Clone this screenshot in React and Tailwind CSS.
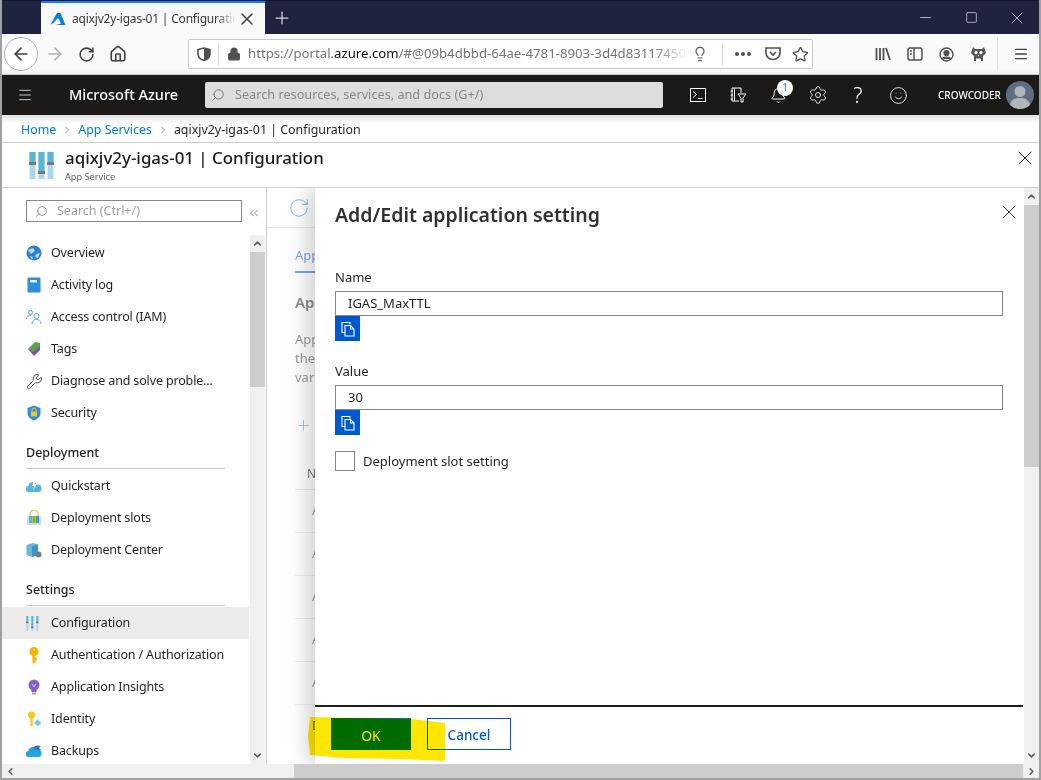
import {
    ArrowLeft, ArrowRight, RotateCw, House, Lock, Lightbulb, Star, Menu, X, Plus, Minus, Square,
    Search, Bell, Settings, Smile, ChevronLeft, ChevronRight, ChevronUp, ChevronDown, ChevronsLeft, Wrench,
} from 'lucide-react';

const font = { fontFamily: '"Noto Sans", "Open Sans", sans-serif' };

const AzureLogo = ({ size = 16 }) => (
    <svg width={size} height={size} viewBox="0 0 16 16">
        <path d="M7 2 L10.5 2 L15.5 14 L5.5 14 L11 12.4 L8 7 L3.5 12 L0.5 13.5 Z" fill="#0d7fd6" />
    </svg>
);

const Sliders = ({ width = 25, height = 27, barWidth = 6, bar = '#59b4d9', light = '#a8d8ee', knob = '#7a7a7a' }) => (
    <svg width={width} height={height} viewBox="0 0 25 27">
        {[0.5, 9.5, 18.5].map((x, i) => (
            <g key={x}>
                <rect x={x} y="0" width={barWidth} height="27" fill={light} />
                <rect x={x} y="0" width={barWidth} height={[10, 19, 10][i]} fill={bar} />
                <rect x={x - 0.5} y={[10, 19, 10][i]} width={barWidth + 1} height="3" fill={knob} />
            </g>
        ))}
    </svg>
);

const icons = {
    overview: (
        <svg width="16" height="16" viewBox="0 0 16 16">
            <circle cx="8" cy="8" r="7.5" fill="#2f7fd0" />
            <path d="M2 5 L7 3 L9 6 L5 9 Z M10 9 L14 8 L12 13 L9 12 Z M4 11 L7 12 L6 15 Z" fill="#b5daf2" />
        </svg>
    ),
    log: (
        <svg width="16" height="16" viewBox="0 0 16 16">
            <rect x="1.5" y="0.5" width="13" height="15" rx="1" fill="#2d8fdc" />
            <rect x="4" y="3" width="7" height="2.5" fill="#e6f3fb" />
        </svg>
    ),
    iam: (
        <svg width="16" height="16" viewBox="0 0 16 16" fill="none" stroke="#4fa3d9" strokeWidth="1">
            <circle cx="4.5" cy="3.5" r="2" />
            <path d="M0.5 10 C1 7 3 6.5 5 6.5" />
            <circle cx="10.5" cy="7" r="2.5" />
            <path d="M6 15 C6.5 11 8.5 10.5 10.5 10.5 C12.5 10.5 14.5 11 15 15" />
        </svg>
    ),
    tags: (
        <svg width="16" height="16" viewBox="0 0 16 16">
            <path d="M2 8 L9 1 L14 2 L14 6 L6 12 Z" fill="#5fa04e" />
            <path d="M2 8 L8 15 L14 9 L14 5 L7 11 Z" fill="#7d53a6" />
        </svg>
    ),
    wrench: <Wrench size={17} strokeWidth={1.2} className="text-[#323130]" />,
    security: (
        <svg width="16" height="16" viewBox="0 0 16 16">
            <path d="M8 0.5 L14.5 3 V8 C14.5 12 11 14.5 8 15.5 C5 14.5 1.5 12 1.5 8 V3 Z" fill="#2d8fdc" />
            <rect x="5" y="6.5" width="6" height="5" fill="#f5c518" />
            <path d="M6 6.5 V5 a2 2 0 0 1 4 0 V6.5" fill="none" stroke="#f5c518" />
        </svg>
    ),
    quickstart: (
        <svg width="16" height="16" viewBox="0 0 16 16">
            <path d="M3 14 a3 3 0 0 1 -0.5 -6 a4.5 4.5 0 0 1 8.5 -1.5 a3.8 3.8 0 0 1 1.5 7.5 Z" fill="#59b4d9" />
            <path d="M8 2 L6 8 H8 L7 12 L11 6 H9 L10 2 Z" fill="#fff" />
        </svg>
    ),
    slots: (
        <svg width="16" height="16" viewBox="0 0 16 16">
            <path d="M4 6 V4 a4 4 0 0 1 8 0 V6" fill="none" stroke="#b8d432" strokeWidth="1.2" />
            <rect x="1" y="6" width="14" height="9" rx="1" fill="#d8d8d8" />
            <rect x="3" y="6" width="3" height="7" fill="#59b4d9" />
            <rect x="6.5" y="6" width="3" height="7" fill="#7fba00" />
            <rect x="10" y="6" width="3" height="7" fill="#3a96dd" />
        </svg>
    ),
    center: (
        <svg width="16" height="16" viewBox="0 0 16 16">
            <path d="M0.5 3 L7 1 L12 2.5 V13 L6 15 L0.5 13 Z" fill="#6cb6dd" />
            <path d="M6 4.5 V15 L12 13 V2.5 Z" fill="#3f93c9" />
            <circle cx="12.5" cy="12.5" r="3" fill="#7a7a7a" />
        </svg>
    ),
    config: <Sliders width={14} height={15} barWidth={3.5} />,
    auth: (
        <svg width="16" height="16" viewBox="0 0 16 16">
            <circle cx="8" cy="4.5" r="4.5" fill="#f8b100" />
            <rect x="6.5" y="6" width="3" height="10" fill="#f8b100" />
            <rect x="9" y="11" width="2" height="2" fill="#f8b100" />
            <circle cx="8" cy="3" r="1" fill="#ffe38a" />
        </svg>
    ),
    insights: (
        <svg width="16" height="16" viewBox="0 0 16 16">
            <circle cx="8" cy="6" r="5.5" fill="#8661c5" />
            <path d="M5.5 10 H10.5 V13 H5.5 Z" fill="#8661c5" />
            <rect x="6" y="13.5" width="4" height="2" fill="#a0a0a0" />
            <path d="M6 5 L8 8 L10 5" fill="none" stroke="#d9c9f2" />
        </svg>
    ),
    identity: (
        <svg width="16" height="16" viewBox="0 0 16 16">
            <circle cx="5.5" cy="4" r="3.5" fill="#f8c81c" />
            <rect x="4.5" y="6" width="2.2" height="9" fill="#f8c81c" />
            <path d="M11.5 8.5 L15.5 12 L11.5 15.5 L8 12 Z" fill="#7cc5e8" />
        </svg>
    ),
    backups: (
        <svg width="16" height="16" viewBox="0 0 16 16">
            <path d="M3 14 a3 3 0 0 1 -0.5 -6 a4.5 4.5 0 0 1 8.5 -1.5 a3.8 3.8 0 0 1 1.5 7.5 Z" fill="#1fa6dc" />
            <path d="M7 5 C9 2 12 2 15 3 L13 5 L15 7 C12 8 9 7 7 5 Z" fill="#3f6fc4" />
        </svg>
    ),
};

const NavRow = ({ icon, label, active }) => (
    <div className={`h-8 flex items-center pl-6 text-[12.5px] tracking-[-0.15px] text-[#201f1e] whitespace-nowrap ${active ? 'bg-[#edebe9]' : ''}`}>
        <span className="w-[25px] flex justify-start">{icons[icon]}</span>
        {label}
    </div>
);

const NavHeading = ({ label }) => (
    <div className="h-10 mb-px mx-6 flex items-end pb-[5px] border-b border-[#c8c8c8] w-[199px] text-[12.5px] font-medium text-[#201f1e]">
        {label}
    </div>
);

const VScroll = ({ thumbHeight, className = '' }) => (
    <div className={`w-[15px] bg-[#f0f0f0] flex flex-col shrink-0 ${className}`}>
        <div className="h-[17px] flex items-center justify-center">
            <ChevronUp size={11} strokeWidth={3.5} className="text-[#606060]" />
        </div>
        <div className="flex-1">
            <div className="bg-[#cdcdcd]" style={{ height: thumbHeight }} />
        </div>
        <div className="h-[17px] flex items-center justify-center">
            <ChevronDown size={11} strokeWidth={3.5} className="text-[#606060]" />
        </div>
    </div>
);

const CopyButton = () => (
    <div className="w-[25px] h-[25px] bg-[#0058d1] flex items-center justify-center">
        <svg width="16" height="16" viewBox="0 0 16 16" fill="none" stroke="#fff" strokeWidth="1.1">
            <path d="M10 3.5 V1.5 H2 V11.5 H5" />
            <path d="M5 4.5 H10.5 L14 8 V15 H5 Z" fill="#0058d1" />
            <path d="M10.5 4.5 V8 H14" />
        </svg>
    </div>
);

const Field = ({ label, value }) => (
    <div className="mt-5 w-[668px]">
        <div className="h-5 pt-[2px] flex items-center text-[13px] text-[#201f1e]">{label}</div>
        <div className="mt-1 h-[25px] border border-[#8a8886] pl-3 flex items-center text-[13px] text-[#201f1e]">{value}</div>
        <CopyButton />
    </div>
);

const BackgroundRows = () => (
    <div className="text-[13px] text-[#8ea0b5]">
        {['A', 'A', 'A', 'A', 'A'].map((t, i) => (
            <div key={i} className="h-[43px] border-b border-[#eeeeee] flex items-center pl-[17px]">{t}</div>
        ))}
        <div className="h-[43px] flex items-center pl-[17px] text-[#6b6b00]">D</div>
    </div>
);

export default function App() {
    return (
        <div style={font} className="relative w-[1041px] h-[780px] overflow-hidden bg-white border-l-2 border-r-2 border-b-2 border-[#a0a0a0] flex flex-col">
            {/* title bar */}
            <div className="h-[34px] -ml-[2px] -mr-[2px] bg-[#20233f] border-t border-[#14172c] flex items-end shrink-0 text-white">
                <div className="ml-[41px] w-[224px] h-[33px] bg-[#f9f9fa] border-t-2 border-[#0a84ff] flex items-center pl-[9px] pr-[8px] text-[#38383d]">
                    <AzureLogo size={16} />
                    <span className="ml-[6px] flex-1 text-[12px] tracking-[-0.2px] whitespace-nowrap overflow-hidden [mask-image:linear-gradient(to_right,black_88%,transparent)]">aqixjv2y-igas-01 | Configuration</span>
                    <X size={20} strokeWidth={1.7} className="ml-[1px] shrink-0" />
                </div>
                <div className="w-[34px] h-[33px] flex items-center justify-center">
                    <Plus size={20} strokeWidth={1.5} className="text-[#d8d9e0]" />
                </div>
                <div className="flex-1" />
                <div className="h-[33px] flex items-center text-[#b8bac6]">
                    <div className="w-[46px] flex justify-center"><Minus size={17} strokeWidth={1.3} /></div>
                    <div className="w-[46px] flex justify-center"><Square size={13} strokeWidth={1.6} /></div>
                    <div className="w-[46px] flex justify-center"><X size={20} strokeWidth={1.1} /></div>
                    <div className="w-px" />
                </div>
            </div>

            {/* firefox toolbar */}
            <div className="h-[41px] -ml-[2px] -mr-[2px] pl-1 bg-[#f9f9fa] border-b border-[#d6d6d6] flex items-center shrink-0 text-[#404040]">
                <div className="w-[34px] h-[34px] rounded-full border border-[#b0b0b0] bg-white flex items-center justify-center">
                    <ArrowLeft size={20} strokeWidth={1.9} />
                </div>
                <div className="w-8 flex justify-center ml-px"><ArrowRight size={20} strokeWidth={1.9} className="text-[#b1b1b3]" /></div>
                <div className="w-8 flex justify-center -ml-px"><RotateCw size={17} strokeWidth={2.2} /></div>
                <div className="w-8 flex justify-center"><House size={18} strokeWidth={2.2} /></div>
                <div className="ml-[54px] w-[625px] h-[30px] bg-white border border-[#c8c8c8] rounded-[2px] flex items-center">
                    <svg width="14" height="14" viewBox="0 0 14 14" className="ml-[8px] shrink-0">
                        <path d="M7 1 L13 2.5 V7 C13 10.5 10 12.5 7 13.5 C4 12.5 1 10.5 1 7 V2.5 Z" fill="none" stroke="#505050" strokeWidth="1.6" />
                        <path d="M7 1 V13.5 C10 12.5 13 10.5 13 7 V2.5 Z" fill="#505050" />
                    </svg>
                    <div className="ml-[7px] h-[22px] w-px bg-[#dcdcdc]" />
                    <Lock size={14} strokeWidth={2.4} fill="#505050" className="ml-[8px] text-[#505050] shrink-0" />
                    <span className="ml-[7px] w-[441px] overflow-hidden whitespace-nowrap text-[13.2px] text-[#737373] [mask-image:linear-gradient(to_right,black_92%,transparent)]">
                        https://portal.<span className="text-[#0c0c0d]">azure.com</span>/#@09b4dbbd-64ae-4781-8903-3d4d831174500
                    </span>
                    <Lightbulb size={16} strokeWidth={1.8} className="ml-[3px] text-[#505050] shrink-0" />
                    <div className="ml-[14px] h-[22px] w-px bg-[#dcdcdc]" />
                    <span className="ml-[12px] flex gap-[2px]">
                        <i className="w-1 h-1 rounded-full bg-[#505050]" />
                        <i className="w-1 h-1 rounded-full bg-[#505050]" />
                        <i className="w-1 h-1 rounded-full bg-[#505050]" />
                    </span>
                    <svg width="16" height="16" viewBox="0 0 16 16" className="ml-[14px] shrink-0" fill="none" stroke="#505050" strokeWidth="1.6">
                        <path d="M1 2 H15 V7 A7 6.5 0 0 1 1 7 Z" />
                        <path d="M5 6 L8 9 L11 6" />
                    </svg>
                    <Star size={17} strokeWidth={1.8} className="ml-[11px] text-[#505050] shrink-0" />
                </div>
                <div className="flex-1" />
                <svg width="16" height="14" viewBox="0 0 16 14" fill="none" stroke="#505050" strokeWidth="1.8" className="mr-4">
                    <path d="M1.5 1 V13 M5 1 V13 M8.5 1 V13 M11 1 L15 13" />
                </svg>
                <svg width="16" height="14" viewBox="0 0 16 14" fill="none" stroke="#505050" strokeWidth="1.5" className="mr-4">
                    <rect x="1" y="1" width="14" height="12" rx="2" />
                    <path d="M7 1 V13 M3 4 H5 M3 7 H5" />
                </svg>
                <svg width="15" height="15" viewBox="0 0 15 15" fill="none" stroke="#505050" strokeWidth="1.4" className="mr-4">
                    <circle cx="7.5" cy="7.5" r="6.5" />
                    <circle cx="7.5" cy="6" r="2.4" fill="#505050" />
                    <path d="M3.5 12 C4 9.5 11 9.5 11.5 12" fill="#505050" />
                </svg>
                <svg width="17" height="16" viewBox="0 0 17 16" className="mr-[10px]">
                    <path d="M3 1 L5 3 H12 L14 1 L16 7 L13 10 V15 H11 V12.5 H6 V15 H4 V10 L1 7 Z" fill="#555" />
                    <circle cx="6" cy="6.5" r="1.6" fill="#fff" />
                    <circle cx="11" cy="6.5" r="1.6" fill="#fff" />
                    <path d="M7.5 9 H9.5 L8.5 10.5 Z" fill="#fff" />
                </svg>
                <div className="h-[34px] w-px bg-[#dcdcdc] mr-[15px]" />
                <Menu size={16} strokeWidth={2} className="mr-3" />
            </div>

            {/* azure header */}
            <div className="relative z-10 h-10 -ml-[2px] -mr-[2px] bg-[#1b1a19] flex items-center shrink-0 text-white shadow-[0_2px_8px_rgba(0,0,0,0.2)]">
                <Menu size={16} strokeWidth={1.5} className="ml-[17px] text-[#c8c6c4]" />
                <span className="ml-[36px] w-[136px] text-[14.5px] font-medium whitespace-nowrap">Microsoft Azure</span>
                <div className="w-[458px] h-[26px] bg-[#dfdddb] rounded-[2px] flex items-center pl-[6px] text-[12.7px] text-[#8a8886]">
                    <Search size={14} strokeWidth={1.3} className="text-[#605e5c] -scale-x-100" />
                    <span className="ml-[10px]">Search resources, services, and docs (G+/)</span>
                </div>
                <div className="ml-[15px] flex items-center">
                    <div className="w-10 flex justify-center">
                        <svg width="16" height="14" viewBox="0 0 16 14" fill="none" stroke="#fff" strokeWidth="1">
                            <rect x="0.5" y="0.5" width="15" height="13" />
                            <path d="M3 3.5 L6.5 6.5 L3 9.5 M8 10.5 H12.5" />
                        </svg>
                    </div>
                    <div className="w-10 flex justify-center">
                        <svg width="17" height="16" viewBox="0 0 17 16" fill="none" stroke="#fff" strokeWidth="1">
                            <path d="M2 1 H11 V6 M9 14 H2 V1 M0.5 4 H3 M0.5 8 H3 M0.5 12 H3 M4.5 1 V14" />
                            <path d="M8 7 H16 L13 11 V15 H11 V11 Z" />
                        </svg>
                    </div>
                    <div className="w-10 flex justify-center relative">
                        <Bell size={17} strokeWidth={1.4} />
                        <div className="absolute -top-[7px] left-[19px] w-4 h-4 rounded-full bg-white text-[#2f6fc4] text-[10px] flex items-center justify-center">1</div>
                    </div>
                    <div className="w-10 flex justify-center"><Settings size={20} strokeWidth={1} /></div>
                    <div className="w-10 flex justify-center text-[21px] font-light leading-none">?</div>
                    <div className="w-10 flex justify-center"><Smile size={19} strokeWidth={1.1} /></div>
                </div>
                <span className="ml-5 w-[62px] text-[10px] font-medium whitespace-nowrap">CROWCODER</span>
                <div className="ml-[6px] w-7 h-7 rounded-full bg-[#5d6d80] overflow-hidden flex justify-center shrink-0">
                    <svg width="28" height="28" viewBox="0 0 28 28" fill="#b0b5ba">
                        <circle cx="14" cy="10.5" r="5.5" />
                        <path d="M3 28 C4 18 9 17 14 17 C19 17 24 18 25 28 Z" />
                    </svg>
                </div>
            </div>

            {/* breadcrumb */}
            <div className="h-[28px] pl-[19px] pt-[3px] flex items-center gap-[5px] text-[12.4px] border-b border-[#cccccc] shrink-0">
                <span className="text-[#0078d4]">Home</span>
                <ChevronRight size={12} strokeWidth={1.3} className="text-[#605e5c]" />
                <span className="text-[#0078d4]">App Services</span>
                <ChevronRight size={12} strokeWidth={1.3} className="text-[#605e5c]" />
                <span className="text-[#201f1e]">aqixjv2y-igas-01 | Configuration</span>
            </div>

            {/* resource title */}
            <div className="h-[45px] pl-[27px] pr-[2px] flex items-center border-b border-[#cccccc] shrink-0">
                <Sliders />
                <div className="ml-[11px] flex-1">
                    <div className="text-[16.9px] leading-[21px] font-medium text-[#1b1a19]">aqixjv2y-igas-01 | Configuration</div>
                    <div className="text-[9.2px] leading-3 mt-[3px] text-[#605e5c]">App Service</div>
                </div>
                <X size={24} strokeWidth={1} className="self-start mt-[3px] text-[#201f1e]" />
            </div>

            {/* body */}
            <div className="relative flex-1 min-h-0 flex overflow-hidden">
                <div className="w-[265px] shrink-0 border-r border-[#cccccc] flex flex-col">
                    <div className="h-[49px] shrink-0 flex items-start pt-[12px]">
                        <div className="ml-6 w-[216px] h-[22px] border border-[#8a8886] flex items-center pl-1 text-[12.5px] text-[#a19f9d]">
                            <Search size={13} strokeWidth={1.2} className="text-[#605e5c] -scale-x-100 ml-1" />
                            <span className="ml-[9px]">Search (Ctrl+/)</span>
                        </div>
                        <ChevronsLeft size={14} strokeWidth={1.2} className="ml-[5px] mt-[6px] text-[#605e5c]" />
                    </div>
                    <div className="flex-1 min-h-0 flex">
                        <div className="flex-1 min-w-0 overflow-hidden">
                            <NavRow icon="overview" label="Overview" />
                            <NavRow icon="log" label="Activity log" />
                            <NavRow icon="iam" label="Access control (IAM)" />
                            <NavRow icon="tags" label="Tags" />
                            <NavRow icon="wrench" label="Diagnose and solve proble..." />
                            <NavRow icon="security" label="Security" />
                            <NavHeading label="Deployment" />
                            <NavRow icon="quickstart" label="Quickstart" />
                            <NavRow icon="slots" label="Deployment slots" />
                            <NavRow icon="center" label="Deployment Center" />
                            <NavHeading label="Settings" />
                            <NavRow icon="config" label="Configuration" active />
                            <NavRow icon="auth" label="Authentication / Authorization" />
                            <NavRow icon="insights" label="Application Insights" />
                            <NavRow icon="identity" label="Identity" />
                            <NavRow icon="backups" label="Backups" />
                        </div>
                        <VScroll thumbHeight={135} className="ml-px mr-px -mt-[2px]" />
                    </div>
                </div>

                <div className="flex-1 min-w-0 overflow-hidden">
                    <div className="h-10 border-b border-[#e5e5e5] flex items-center pl-[21px]">
                        <RotateCw size={22} strokeWidth={1} className="text-[#7ab4e0]" />
                    </div>
                    <div className="pl-7 w-[300px]">
                        <div className="h-[45px] pt-[18px] border-b-2 border-[#7aa7e8] w-[60px] text-[13px] text-[#7aa7e8]">App</div>
                        <div className="mt-[18px] text-[15px] font-semibold text-[#8a8a8a]">App</div>
                        <div className="mt-[16px] text-[13px] leading-[19px] text-[#9a9a9a]">App<br />the<br />vari</div>
                        <div className="mt-[30px]"><Plus size={17} strokeWidth={1} className="text-[#8fb0d8]" /></div>
                        <div className="mt-[29px] h-[27px] pl-[12px] pt-[2px] border-b border-[#e5e5e5] text-[12px] text-[#7a7a7a]">N</div>
                        <BackgroundRows />
                    </div>
                </div>

                {/* Add/Edit blade */}
                <div className="absolute top-0 bottom-0 left-[313px] w-[724px] bg-white flex shadow-[-8px_0_20px_rgba(0,0,0,0.18)]">
                    <div className="w-[708px] mr-px flex flex-col">
                        <div className="flex-1 pl-5 pt-[15px] relative">
                            <div className="h-6 flex items-center text-[19.5px] font-semibold text-[#323130] whitespace-nowrap">Add/Edit application setting</div>
                            <X size={24} strokeWidth={1} className="absolute top-3 right-[2px] text-[#323130]" />
                            <div className="h-5" />
                            <Field label="Name" value="IGAS_MaxTTL" />
                            <Field label="Value" value="30" />
                            <div className="mt-4 flex items-center text-[13px] text-[#201f1e]">
                                <div className="w-5 h-5 border border-[#8a8886]" />
                                <span className="ml-2 pt-px">Deployment slot setting</span>
                            </div>
                        </div>
                        <div className="h-[59px] border-t-2 border-[#201f1e] flex items-start pt-[11px] pl-4 gap-4 shrink-0">
                            <div className="w-20 h-8 pt-[2px] bg-[#0078d4] flex items-center justify-center text-[14px] text-white">OK</div>
                            <div className="w-[84px] h-8 pt-[2px] border border-[#0058d1] flex items-center justify-center text-[13.5px] text-[#0058d1] font-medium">Cancel</div>
                        </div>
                    </div>
                    <VScroll thumbHeight={262} />
                </div>
            </div>

            {/* bottom scrollbar */}
            <div className="h-[14px] bg-[#f0f0f0] flex items-center shrink-0">
                <div className="w-[292px] pl-[3px]"><ChevronLeft size={11} strokeWidth={3.5} className="text-[#606060]" /></div>
                <div className="w-[729px] h-full bg-[#cdcdcd]" />
                <div className="flex-1 flex justify-center"><ChevronRight size={11} strokeWidth={3.5} className="text-[#606060]" /></div>
            </div>

            {/* highlighter mark */}
            <svg className="absolute left-[306px] top-[715px] mix-blend-multiply pointer-events-none" width="140" height="50" viewBox="0 0 140 50">
                <path d="M2 2 L103 4 L137 8 L137 46 L90 44 L37 43 L2 40 L0 20 Z" fill="#ffe600" />
            </svg>
        </div>
    );
}
